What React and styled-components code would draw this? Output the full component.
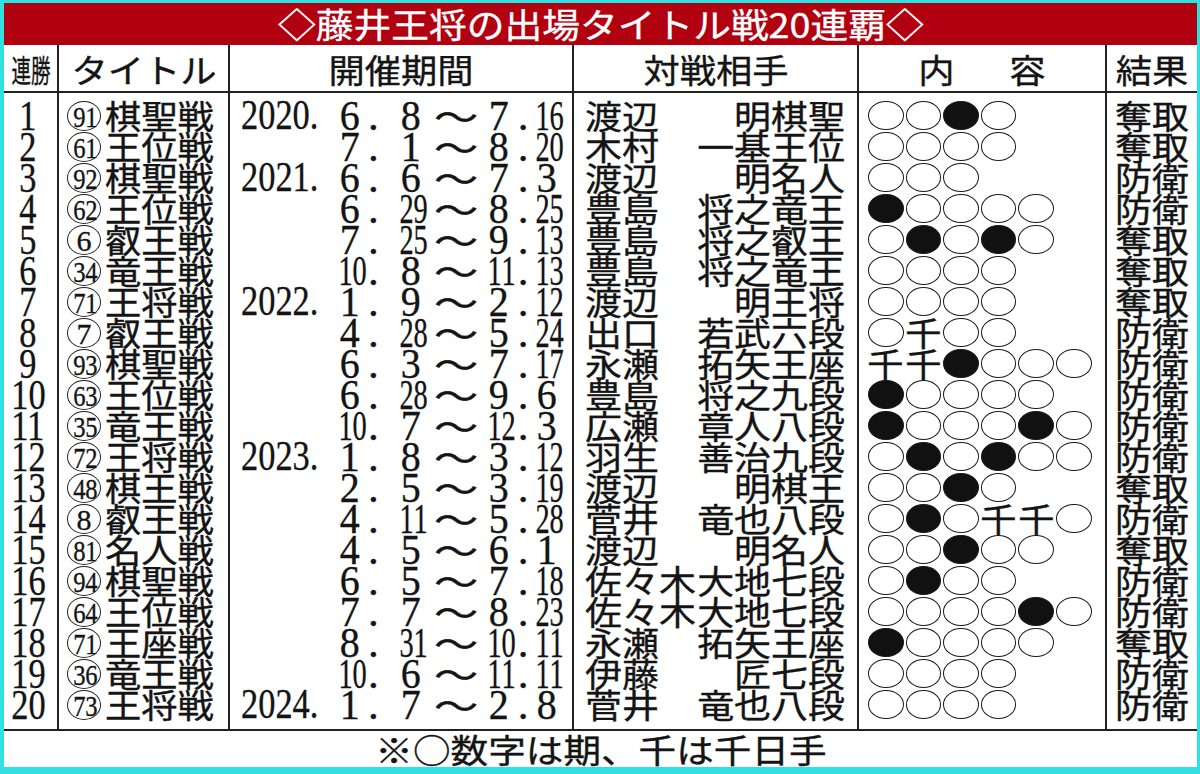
import React from 'react';
import styled, { createGlobalStyle } from 'styled-components';

const GlobalStyle = createGlobalStyle`
  html, body { margin: 0; padding: 0; background: #2fe1e1; }
  * { box-sizing: border-box; }
`;

const JP = `"Noto Sans CJK JP", "Noto Sans", sans-serif`;
const NUM = `"Liberation Serif", "Noto Sans CJK JP", serif`;
const COLS = '53px 171px 344px 285px 248px 92px';
const INK = '#141414';
const LINE = '2px solid #222';

const Frame = styled.div`
  width: 1200px;
  height: 774px;
  padding: 3px 3px 7px 4px;
  background: #2fe1e1;
`;

const Sheet = styled.div`
  height: 100%;
  background: #fff;
  display: flex;
  flex-direction: column;
  color: ${INK};
  -webkit-text-stroke: 0.35px currentColor;
`;

const TitleBar = styled.div`
  height: 42px;
  flex: none;
  background: #b1000f;
  color: #fff;
  display: flex;
  align-items: center;
  justify-content: center;
  font-family: ${JP};
  font-size: 34px;
  line-height: 42px;
`;

const Stretch = styled.span`
  display: inline-block;
  white-space: nowrap;
  transform: scaleX(${p => p.$sx ?? 1});
  transform-origin: ${p => p.$origin ?? 'center'};
`;

const Kanji = styled(Stretch)`
  font-family: ${JP};
  font-size: 33px;
  line-height: 31px;
`;

const Digits = styled(Stretch)`
  font-family: ${NUM};
  font-size: 43px;
  line-height: 31px;
`;

const PairDigit = styled.span`
  display: inline-block;
  width: 14px;
  font-family: ${NUM};
  font-size: 43px;
  line-height: 31px;
  text-align: center;
  transform: scaleX(0.66);
`;

const Pair = styled.span`
  display: flex;
  width: 28px;
  justify-content: center;
`;

const HeadRow = styled.div`
  display: grid;
  grid-template-columns: ${COLS};
  height: 48px;
  flex: none;
  border-bottom: ${LINE};
`;

const HeadCell = styled.div`
  display: flex;
  align-items: center;
  justify-content: center;
  gap: ${p => p.$gap ?? 0}px;
  padding-top: 2px;
  border-left: ${p => (p.$first ? 'none' : LINE)};
  font-family: ${JP};
  font-size: ${p => p.$size ?? 33}px;
  line-height: 40px;
`;

const Body = styled.div`
  display: grid;
  grid-template-columns: ${COLS};
  flex: none;
  border-bottom: ${LINE};
`;

const Column = styled.div`
  display: flex;
  flex-direction: column;
  padding: 7px 0 9px;
  border-left: ${p => (p.$first ? 'none' : LINE)};
`;

const Cell = styled.div`
  height: 31px;
  display: flex;
  align-items: center;
  white-space: nowrap;
`;

const NumCell = styled(Cell)`
  justify-content: center;
  padding-right: 5px;
`;

const TitleCell = styled(Cell)`
  padding-left: 8px;
`;

const Circled = styled.span`
  flex: none;
  width: 34px;
  height: 30px;
  margin-right: 4px;
  border: 1.5px solid #222;
  border-radius: 50%;
  display: flex;
  align-items: center;
  justify-content: center;
  font-family: ${NUM};
  font-size: 30px;
  line-height: 27px;
  padding-top: 1px;
`;

const CircleDigit = styled.span`
  display: inline-block;
  width: ${p => (p.$pair ? 12.5 : 16)}px;
  text-align: center;
  transform: scaleX(${p => (p.$pair ? 0.82 : 1)});
`;

const DateCell = styled(Cell)`
  padding: 0 11px;
`;

const Year = styled.span`
  width: 90px;
  flex: none;
`;

const Range = styled.div`
  display: flex;
  align-items: center;
  margin-left: auto;
`;

const Slot = styled.span`
  width: ${p => p.$w}px;
  flex: none;
  display: flex;
  align-items: center;
  justify-content: ${p => p.$justify ?? 'center'};
  padding-left: ${p => p.$pl ?? 0}px;
`;

const Tilde = styled(Stretch)`
  font-family: ${JP};
  font-size: 34px;
  line-height: 31px;
`;

const OppCell = styled(Cell)`
  justify-content: space-between;
  padding: 0 12px 0 11px;
`;

const GameCell = styled(Cell)`
  padding-left: 9px;
  gap: 2px;
`;

const Stone = styled.span`
  flex: none;
  width: 35.6px;
  height: 29px;
  border: 1.4px solid #1a1a1a;
  border-radius: 50%;
  background: ${p => (p.$black ? '#111' : '#fff')};
`;

const SenSlot = styled.span`
  flex: none;
  width: 35.6px;
  display: flex;
  justify-content: center;
`;

const ResultCell = styled(Cell)`
  justify-content: center;
`;

const Footer = styled.div`
  flex: 1;
  display: flex;
  align-items: center;
  justify-content: center;
  font-family: ${JP};
  font-size: 33px;
  line-height: 36px;
`;

const rows = [
  [1, 91, '棋聖戦', '2020.', '6', '8', '7', '16', '渡辺', '明棋聖', 'ooxo', '奪取'],
  [2, 61, '王位戦', '', '7', '1', '8', '20', '木村', '一基王位', 'oooo', '奪取'],
  [3, 92, '棋聖戦', '2021.', '6', '6', '7', '3', '渡辺', '明名人', 'ooo', '防衛'],
  [4, 62, '王位戦', '', '6', '29', '8', '25', '豊島', '将之竜王', 'xoooo', '防衛'],
  [5, 6, '叡王戦', '', '7', '25', '9', '13', '豊島', '将之叡王', 'oxoxo', '奪取'],
  [6, 34, '竜王戦', '', '10', '8', '11', '13', '豊島', '将之竜王', 'oooo', '奪取'],
  [7, 71, '王将戦', '2022.', '1', '9', '2', '12', '渡辺', '明王将', 'oooo', '奪取'],
  [8, 7, '叡王戦', '', '4', '28', '5', '24', '出口', '若武六段', 'osoo', '防衛'],
  [9, 93, '棋聖戦', '', '6', '3', '7', '17', '永瀬', '拓矢王座', 'ssxooo', '防衛'],
  [10, 63, '王位戦', '', '6', '28', '9', '6', '豊島', '将之九段', 'xoooo', '防衛'],
  [11, 35, '竜王戦', '', '10', '7', '12', '3', '広瀬', '章人八段', 'xoooxo', '防衛'],
  [12, 72, '王将戦', '2023.', '1', '8', '3', '12', '羽生', '善治九段', 'oxoxoo', '防衛'],
  [13, 48, '棋王戦', '', '2', '5', '3', '19', '渡辺', '明棋王', 'ooxo', '奪取'],
  [14, 8, '叡王戦', '', '4', '11', '5', '28', '菅井', '竜也八段', 'oxosso', '防衛'],
  [15, 81, '名人戦', '', '4', '5', '6', '1', '渡辺', '明名人', 'ooxoo', '奪取'],
  [16, 94, '棋聖戦', '', '6', '5', '7', '18', '佐々木', '大地七段', 'oxoo', '防衛'],
  [17, 64, '王位戦', '', '7', '7', '8', '23', '佐々木', '大地七段', 'ooooxo', '防衛'],
  [18, 71, '王座戦', '', '8', '31', '10', '11', '永瀬', '拓矢王座', 'xoooo', '奪取'],
  [19, 36, '竜王戦', '', '10', '6', '11', '11', '伊藤', '匠七段', 'oooo', '防衛'],
  [20, 73, '王将戦', '2024.', '1', '7', '2', '8', '菅井', '竜也八段', 'oooo', '防衛'],
];

const DateNum = ({ v }) =>
  v.length > 1 ? (
    <Pair>
      {v.split('').map((d, i) => (
        <PairDigit key={i}>{d}</PairDigit>
      ))}
    </Pair>
  ) : (
    <Digits $sx={0.93}>{v}</Digits>
  );

const CircleNum = ({ n }) => {
  const s = String(n);
  return (
    <Circled>
      {s.split('').map((d, i) => (
        <CircleDigit key={i} $pair={s.length > 1}>{d}</CircleDigit>
      ))}
    </Circled>
  );
};

export default function App() {
  return (
    <>
      <GlobalStyle />
      <Frame>
        <Sheet>
          <TitleBar>
            <Stretch $sx={1.11}>◇藤井王将の出場タイトル戦20連覇◇</Stretch>
          </TitleBar>
          <HeadRow>
            <HeadCell $first $size={31}>
              <Stretch $sx={0.63}>連勝</Stretch>
            </HeadCell>
            <HeadCell><Stretch $sx={1.1}>タイトル</Stretch></HeadCell>
            <HeadCell><Stretch $sx={1.1}>開催期間</Stretch></HeadCell>
            <HeadCell><Stretch $sx={1.1}>対戦相手</Stretch></HeadCell>
            <HeadCell $gap={58}>
              <Stretch $sx={1.1}>内</Stretch>
              <Stretch $sx={1.1}>容</Stretch>
            </HeadCell>
            <HeadCell><Stretch $sx={1.1}>結果</Stretch></HeadCell>
          </HeadRow>
          <Body>
            <Column $first>
              {rows.map(r => (
                <NumCell key={r[0]}>
                  <Digits $sx={0.8}>{r[0]}</Digits>
                </NumCell>
              ))}
            </Column>
            <Column>
              {rows.map(r => (
                <TitleCell key={r[0]}>
                  <CircleNum n={r[1]} />
                  <Kanji $sx={1.1} $origin="left">{r[2]}</Kanji>
                </TitleCell>
              ))}
            </Column>
            <Column>
              {rows.map(r => (
                <DateCell key={r[0]}>
                  <Year>
                    {r[3] && <Digits $sx={0.8} $origin="left">{r[3]}</Digits>}
                  </Year>
                  <Range>
                    <Slot $w={32}><DateNum v={r[4]} /></Slot>
                    <Slot $w={29} $justify="flex-start" $pl={2}><Digits>.</Digits></Slot>
                    <Slot $w={32}><DateNum v={r[5]} /></Slot>
                    <Slot $w={58}><Tilde $sx={1.3}>～</Tilde></Slot>
                    <Slot $w={28}><DateNum v={r[6]} /></Slot>
                    <Slot $w={20}><Digits>.</Digits></Slot>
                    <Slot $w={28}><DateNum v={r[7]} /></Slot>
                  </Range>
                </DateCell>
              ))}
            </Column>
            <Column>
              {rows.map(r => (
                <OppCell key={r[0]}>
                  <Kanji $sx={1.12} $origin="left">{r[8]}</Kanji>
                  <Kanji $sx={1.12} $origin="right">{r[9]}</Kanji>
                </OppCell>
              ))}
            </Column>
            <Column>
              {rows.map(r => (
                <GameCell key={r[0]}>
                  {r[10].split('').map((g, i) =>
                    g === 's' ? (
                      <SenSlot key={i}><Kanji $sx={1.1}>千</Kanji></SenSlot>
                    ) : (
                      <Stone key={i} $black={g === 'x'} />
                    )
                  )}
                </GameCell>
              ))}
            </Column>
            <Column>
              {rows.map(r => (
                <ResultCell key={r[0]}>
                  <Kanji $sx={1.12}>{r[11]}</Kanji>
                </ResultCell>
              ))}
            </Column>
          </Body>
          <Footer>
            <Stretch $sx={1.14}>※○数字は期、千は千日手</Stretch>
          </Footer>
        </Sheet>
      </Frame>
    </>
  );
}
